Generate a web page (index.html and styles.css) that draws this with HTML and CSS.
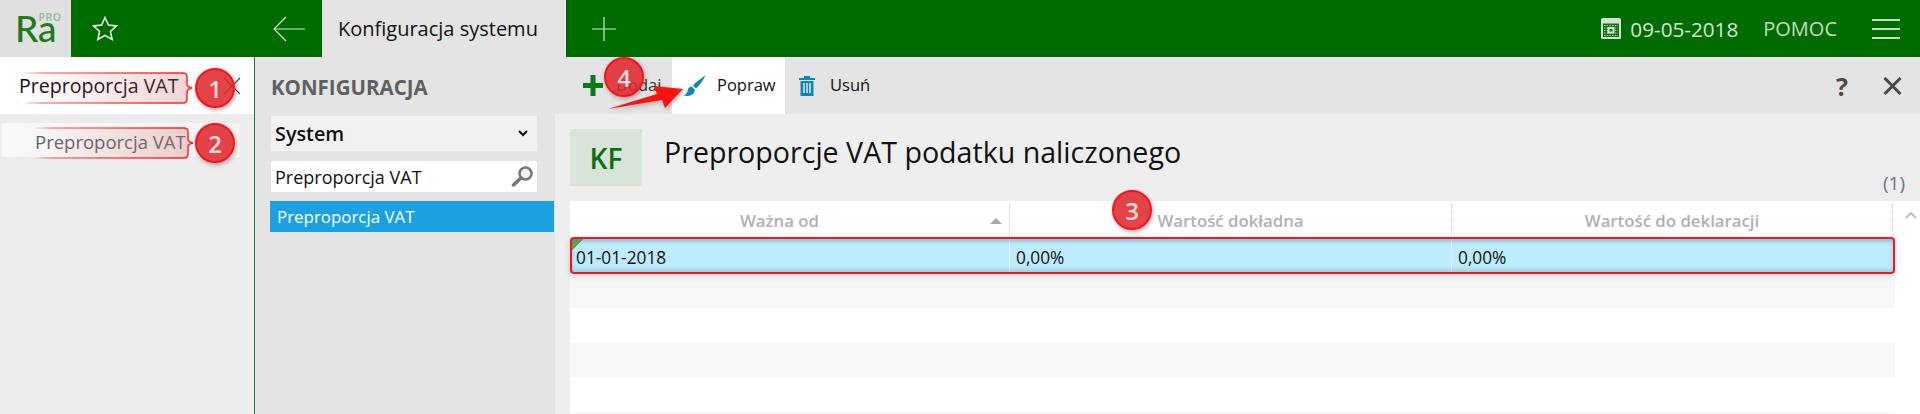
FILE: index.html
```html
<!DOCTYPE html>
<html lang="pl">
<head>
<meta charset="utf-8">
<title>Konfiguracja systemu</title>
<link rel="stylesheet" href="styles.css">
</head>
<body>
<div class="topbar">
	<div class="logo"><span class="logo-ra">Ra</span><span class="logo-pro">PRO</span></div>
	<div class="nav">
		<svg class="star" width="26" height="25" viewBox="0 0 26 25"><path d="M13 1.500l3.400 7.600 8.100.8-6.100 5.500 1.800 8.100L13 19.300l-7.200 4.200 1.800-8.100-6.100-5.500 8.100-.8z" fill="none" stroke="#eef5ee" stroke-width="1.500"/></svg>
		<svg class="back" width="32" height="26" viewBox="0 0 32 26"><path d="M13 1L1 13l12 12M1 13h31" fill="none" stroke="#d5e6d5" stroke-width="1.200"/></svg>
	</div>
	<div class="tab">Konfiguracja systemu</div>
	<svg class="add" width="24" height="24" viewBox="0 0 24 24"><path d="M12 0v24M0 12h24" stroke="#d5e6d5" stroke-width="1.200"/></svg>
	<div class="top-right">
		<svg class="cal" width="20" height="21" viewBox="0 0 20 21"><rect width="20" height="21" rx="1.500" fill="#d3e4d3"/><rect x="2" y="5.500" width="16" height="13.500" fill="#0f700f"/><path d="M3 7.500h14M3 10h14M3 12.500h14M3 15h14M3 17.500h14" stroke="#b9d6b9" stroke-dasharray="1.500 1.200"/><rect x="6.500" y="9" width="7" height="6.500" fill="#d3e4d3"/><rect x="8.500" y="11" width="3" height="2.500" fill="#0f700f"/></svg>
		<span class="date">09-05-2018</span>
		<span class="help-link">POMOC</span>
		<div class="burger"><i></i><i></i><i></i></div>
	</div>
</div>

<div class="main">
	<div class="left">
		<div class="left-search">
			<span>Preproporcja VAT</span>
			<svg width="18" height="18" viewBox="0 0 18 18"><path d="M1 1l16 16M17 1L1 17" stroke="#444" stroke-width="1.100"/></svg>
		</div>
		<div class="left-result">Preproporcja VAT</div>
	</div>

	<div class="middle">
		<div class="middle-title">KONFIGURACJA</div>
		<div class="select">
			<span>System</span>
			<svg width="10" height="7" viewBox="0 0 10 7"><path d="M1 1l4 4 4-4" fill="none" stroke="#111" stroke-width="2"/></svg>
		</div>
		<div class="search">
			<span>Preproporcja VAT</span>
			<svg width="23" height="21" viewBox="0 0 23 21"><circle cx="14.500" cy="7.500" r="6" fill="#f4f4f4" stroke="#777" stroke-width="2.500"/><path d="M10 12l-7.500 7" stroke="#777" stroke-width="3.500" stroke-linecap="round"/></svg>
		</div>
		<div class="list-item">Preproporcja VAT</div>
	</div>

	<div class="content">
		<div class="toolbar">
			<div class="tool tool-add">
				<svg width="20" height="21" viewBox="0 0 20 21"><path d="M10 0v21M0 10.500h20" stroke="#0a7d12" stroke-width="5"/></svg>
				<span>Dodaj</span>
			</div>
			<div class="tool tool-edit">
				<svg width="23" height="21" viewBox="0 0 23 21"><path d="M22.500 0C20 2.500 14 6 10 10.500l3 3C17 10 21 4 22.500 0z" fill="#0f86b8"/><path d="M8.500 11.500c-2.500.5-3.500 2-3.800 4C4.300 18 2.500 19.500.5 20.500c4 1 9.500.5 11-3.500.6-1.600.2-2.500-.3-3z" fill="#0f86b8"/></svg>
				<span>Popraw</span>
			</div>
			<div class="tool tool-del">
				<svg width="16" height="21" viewBox="0 0 16 21"><path d="M0 3h16v2H0zM5 1h6v2H5zM1.500 6h13v15h-13z" fill="#0f86b8"/><path d="M5 8v10M8 8v10M11 8v10" stroke="#e4e4e4" stroke-width="1.500"/></svg>
				<span>Usuń</span>
			</div>
			<div class="tool-right">
				<span class="question">?</span>
				<svg width="19" height="18" viewBox="0 0 19 18"><path d="M1.500 1l16 16M17.500 1l-16 16" stroke="#4a4a4a" stroke-width="3"/></svg>
			</div>
		</div>

		<div class="panel">
			<div class="heading">
				<div class="kf">KF</div>
				<div class="title">Preproporcje VAT podatku naliczonego</div>
			</div>
			<div class="count">(1)</div>
			<div class="table">
				<div class="thead">
					<div class="th th-sorted">Ważna od<b class="sort"></b></div>
					<div class="th">Wartość dokładna</div>
					<div class="th">Wartość do deklaracji</div>
					<div class="th-end"><svg width="12" height="7" viewBox="0 0 12 7"><path d="M1 6l5-5 5 5" fill="none" stroke="#bbb" stroke-width="1.800"/></svg></div>
				</div>
				<div class="tr selected">
					<div class="td">01-01-2018</div>
					<div class="td">0,00%</div>
					<div class="td">0,00%</div>
				</div>
				<div class="tr odd"></div>
				<div class="tr"></div>
				<div class="tr odd"></div>
				<div class="tr"></div>
				<div class="tr odd"></div>
			</div>
		</div>
	</div>
</div>

<!-- tutorial marks drawn over the screenshot -->
<div class="marks">
	<svg class="callout c1" width="172" height="32" viewBox="0 0 172 32"><defs><linearGradient id="fade1"><stop offset="0" stop-color="#f22" stop-opacity="0"/><stop offset=".12" stop-color="#f22" stop-opacity=".5"/><stop offset=".9" stop-color="#f22"/></linearGradient><linearGradient id="fill1"><stop offset="0" stop-color="#d66" stop-opacity="0"/><stop offset="1" stop-color="#c66" stop-opacity=".28"/></linearGradient></defs><path d="M0 1h161q4 0 4 4v7q0 3 5 4-5 1-5 4v7q0 4-4 4H0" fill="url(#fill1)" stroke="url(#fade1)" stroke-width="1.500"/></svg>
	<svg class="callout c2" width="162" height="32" viewBox="0 0 162 32"><path d="M0 1h151q4 0 4 4v7q0 3 5 4-5 1-5 4v7q0 4-4 4H0" fill="url(#fill1)" stroke="url(#fade1)" stroke-width="1.500"/></svg>
	<div class="row-mark"></div>
	<svg class="arrow" width="76" height="28" viewBox="0 0 76 28"><path d="M0 26L49 11l-3-8 29 3-18 19-3-8z" fill="#f11"/></svg>
	<div class="badge b1">1</div>
	<div class="badge b2">2</div>
	<div class="badge b3">3</div>
	<div class="badge b4">4</div>
</div>
</body>
</html>
```
FILE: styles.css
```css
* {
	box-sizing: border-box;
}

html, body {
	height: 414px;
	overflow: hidden;
}

body {
	margin: 0;
	font-family: "Open Sans", sans-serif;
	font-size: 17px;
	color: #111;
	background: #eee;
}

.topbar {
	display: flex;
	align-items: center;
	height: 57px;
	background: #006c00;
}

.logo {
	display: flex;
	width: 71px;
	height: 57px;
	padding: 9px 0 0 15px;
	background: #e0e0e0;
}

.logo-ra {
	font-family: "Lato", sans-serif;
	font-size: 37px;
	line-height: 37px;
	font-weight: 500;
	color: #1c7c1c;
}

.logo-pro {
	margin-left: -18px;
	margin-top: 3px;
	font-size: 10.500px;
	line-height: 10px;
	font-weight: 600;
	letter-spacing: .5px;
	color: #8cc08c;
}

.nav {
	display: flex;
	align-items: center;
	width: 251px;
	padding-left: 21px;
}

.back {
	margin-left: 155px;
}

.tab {
	display: flex;
	align-items: center;
	width: 244px;
	height: 57px;
	padding-left: 16px;
	font-size: 20px;
	font-weight: 500;
	background: #e4e4e4;
}

.add {
	margin-left: 26px;
}

.top-right {
	display: flex;
	align-items: center;
	margin-left: auto;
	padding-right: 20px;
	color: #d5e6d5;
}

.date {
	margin-left: 9px;
	font-size: 20.700px;
}

.help-link {
	margin-left: 25px;
	font-size: 20px;
	color: #c4dec4;
}

.burger {
	display: flex;
	flex-direction: column;
	gap: 7px;
	width: 28px;
	margin-left: 35px;
}

.burger i {
	display: block;
	height: 2px;
	background: #c5dcc5;
}

.main {
	display: flex;
	height: 357px;
}

.left {
	width: 255px;
	border-right: 1px solid #2a7a2a;
	background: #ececec;
}

.left-search {
	display: flex;
	align-items: center;
	justify-content: space-between;
	height: 57px;
	padding: 0 13px 0 19px;
	font-size: 19.600px;
	background: #fff;
}

.left-result {
	display: flex;
	align-items: center;
	width: 238px;
	height: 34px;
	margin: 9px 0 0 2px;
	padding: 2px 0 0 33px;
	font-size: 18.500px;
	color: #666;
	background: linear-gradient(to right, #f8f8f8, #f4f4f4);
}

.middle {
	width: 300px;
	padding: 0 18px 0 16px;
	background: #e4e4e4;
}

.middle-title {
	height: 59px;
	padding: 17px 0 0 0;
	font-size: 20.500px;
	line-height: 26px;
	font-weight: 700;
	color: #5f5f63;
}

.select {
	display: flex;
	align-items: center;
	justify-content: space-between;
	width: 266px;
	height: 35px;
	padding: 0 9px 0 4px;
	font-size: 19.800px;
	font-weight: 600;
	background: #f1f1f1;
}

.search {
	display: flex;
	align-items: center;
	justify-content: space-between;
	width: 266px;
	height: 31px;
	margin-top: 10px;
	padding: 0 3px 0 4px;
	font-size: 18px;
	background: #fff;
}

.list-item {
	display: flex;
	align-items: center;
	width: 284px;
	height: 31px;
	margin: 9px 0 0 -1px;
	padding-left: 7px;
	font-size: 16.900px;
	color: #fff;
	background: #1ba1e2;
}

.content {
	flex: 1;
	display: flex;
	flex-direction: column;
	min-width: 0;
}

.toolbar {
	flex: none;
	display: flex;
	height: 57px;
	padding-left: 28px;
	background: #e4e4e4;
}

.tool {
	display: flex;
	align-items: center;
	font-size: 16.500px;
}

.tool span {
	margin-bottom: 3px;
}

.tool-add {
	width: 89px;
	gap: 13px;
	color: #333;
}

.tool-edit {
	width: 113px;
	gap: 11px;
	padding-left: 11px;
	background: #fff;
}

.tool-del {
	gap: 15px;
	padding-left: 14px;
}

.tool-right {
	display: flex;
	align-items: center;
	gap: 35px;
	margin-left: auto;
	padding-right: 18px;
}

.question {
	font-size: 25px;
	font-weight: 700;
	color: #4a4a4a;
}

.panel {
	flex: 1;
	min-height: 0;
	overflow: hidden;
	padding: 15px 0 0 15px;
}

.heading {
	display: flex;
	align-items: center;
	gap: 22px;
}

.kf {
	display: flex;
	align-items: center;
	justify-content: center;
	width: 72px;
	height: 57px;
	font-size: 28px;
	font-weight: 600;
	color: #0c6f0c;
	background: #d9e4d9;
}

.title {
	font-size: 28.600px;
	margin-top: -12px;
}

.count {
	height: 15px;
	margin: -10px 0 10px;
	padding-right: 15px;
	font-size: 19px;
	line-height: 15px;
	text-align: right;
	color: #6b7480;
}

.table {
	display: flex;
	flex-direction: column;
	background: #fff;
}

.thead {
	display: grid;
	grid-template-columns: 440px 442px 441px 27px;
	height: 37px;
	background: #fff;
}

.th {
	position: relative;
	display: flex;
	align-items: center;
	justify-content: center;
	margin: 3px 0 2px;
	font-size: 16.800px;
	font-weight: 600;
	color: #b0b0b0;
	border-right: 1px dotted #ccc;
}

.th-sorted {
	padding-right: 20px;
}

.sort {
	position: absolute;
	right: 7px;
	top: 14px;
	border-left: 6px solid transparent;
	border-right: 6px solid transparent;
	border-bottom: 6px solid #aaa;
}

.th-end {
	padding: 11px 0 0 12px;
}

.th-end svg {
	display: block;
}

.tr {
	display: grid;
	grid-template-columns: 440px 442px 441px;
	width: 1325px;
	height: 34.500px;
	background: #fff;
}

.tr.odd {
	background: #f7f7f7;
}

.tr.selected {
	height: 35px;
	margin-bottom: .5px;
	background: #bcecfd;
}

.td {
	display: flex;
	align-items: center;
	padding: 3px 0 0 6px;
	font-size: 17.300px;
	border-right: 1px solid #e0f5fd;
}

.marks {
	position: absolute;
	left: 0;
	top: 0;
}

.callout {
	position: absolute;
}

.c1 {
	left: 22px;
	top: 72px;
}

.c2 {
	left: 33px;
	top: 127px;
}

.row-mark {
	position: absolute;
	left: 570px;
	top: 237px;
	width: 1325px;
	height: 37px;
	border: 2px solid #f01820;
	border-radius: 4px;
	box-shadow: inset 0 3px 3px rgba(90, 130, 150, .35), inset 0 -3px 3px rgba(90, 130, 150, .25), 0 2px 6px rgba(0, 0, 0, .15);
	background: linear-gradient(135deg, #5aa84a 8px, transparent 8px) no-repeat;
}

.arrow {
	position: absolute;
	left: 608px;
	top: 83px;
	filter: drop-shadow(1px 2px 2px rgba(0, 0, 0, .25));
}

.badge {
	position: absolute;
	display: flex;
	align-items: center;
	justify-content: center;
	width: 40px;
	height: 40px;
	font-size: 24px;
	font-weight: 600;
	color: #fbdcdc;
	background: rgba(224, 36, 42, .86);
	border: 2px solid #f5141c;
	border-radius: 50%;
	box-shadow: 1px 2px 4px rgba(0, 0, 0, .3);
}

.b1 {
	left: 195px;
	top: 68px;
}

.b2 {
	left: 195px;
	top: 123px;
}

.b3 {
	left: 1112px;
	top: 190px;
}

.b4 {
	left: 604px;
	top: 57px;
}
```
